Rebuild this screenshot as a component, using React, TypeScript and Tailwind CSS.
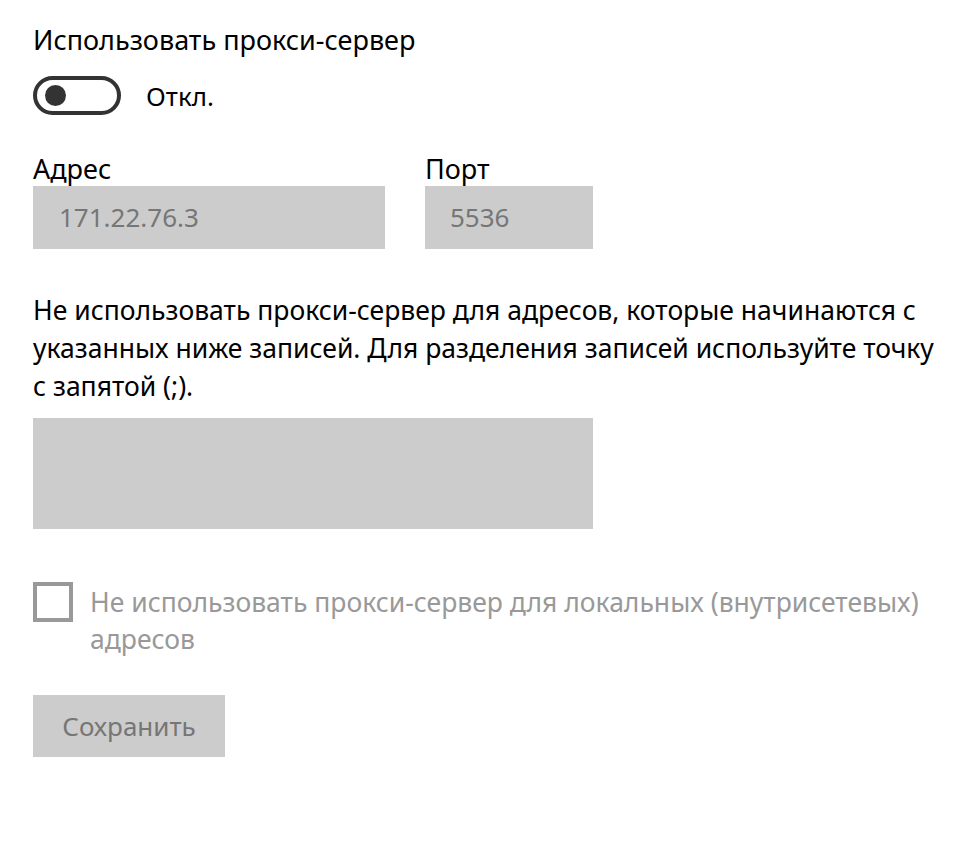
import { useState } from 'react';

const font = { fontFamily: '"Noto Sans", "Open Sans", sans-serif' };

export default function App() {
  const [enabled, setEnabled] = useState(false);
  const [bypassLocal, setBypassLocal] = useState(false);

  return (
    <div className="min-h-screen bg-white text-black" style={font}>
      <div className="pl-[33px] pt-[22px] w-[960px]">
        <div className="text-[27px] leading-[36px]">Использовать прокси-сервер</div>

        {/* toggle */}
        <div className="mt-[18px] flex items-center gap-[25px] h-[39px]">
          <button
            onClick={() => setEnabled(!enabled)}
            className="w-[88px] h-[39px] rounded-full border-[4px] border-[#333333] flex items-center px-[8px]"
          >
            <span className="block w-[21px] h-[21px] rounded-full bg-[#333333]" />
          </button>
          <span className="text-[26px] leading-[36px]">{enabled ? 'Вкл.' : 'Откл.'}</span>
        </div>

        {/* address + port */}
        <div className="mt-[41px] flex gap-[40px]">
          <div className="flex flex-col">
            <label className="text-[27px] leading-[26px] mb-[4px]">Адрес</label>
            <div className="w-[352px] h-[63px] bg-[#cccccc] flex items-center px-[26px] text-[26px] text-[#767676]">
              171.22.76.3
            </div>
          </div>
          <div className="flex flex-col">
            <label className="text-[27px] leading-[26px] mb-[4px]">Порт</label>
            <div className="w-[168px] h-[63px] bg-[#cccccc] flex items-center px-[25px] text-[26px] text-[#767676]">
              5536
            </div>
          </div>
        </div>

        <p className="mt-[42px] text-[26.5px] leading-[38px] w-[920px]">
          Не использовать прокси-сервер для адресов, которые начинаются с указанных ниже записей. Для
          разделения записей используйте точку с запятой (;).
        </p>

        <div className="mt-[13px] w-[560px] h-[111px] bg-[#cccccc]" />

        {/* checkbox */}
        <div className="mt-[53px] flex items-start gap-[17px]">
          <button
            onClick={() => setBypassLocal(!bypassLocal)}
            className="shrink-0 w-[40px] h-[40px] border-[4px] border-[#999999]"
          />
          <span className="mt-[2px] text-[26.5px] leading-[37px] text-[#999999] w-[850px]">
            Не использовать прокси-сервер для локальных (внутрисетевых) адресов
          </span>
        </div>

        <button className="mt-[37px] w-[192px] h-[62px] bg-[#cccccc] text-[26px] text-[#767676]">
          Сохранить
        </button>
      </div>
    </div>
  );
}
